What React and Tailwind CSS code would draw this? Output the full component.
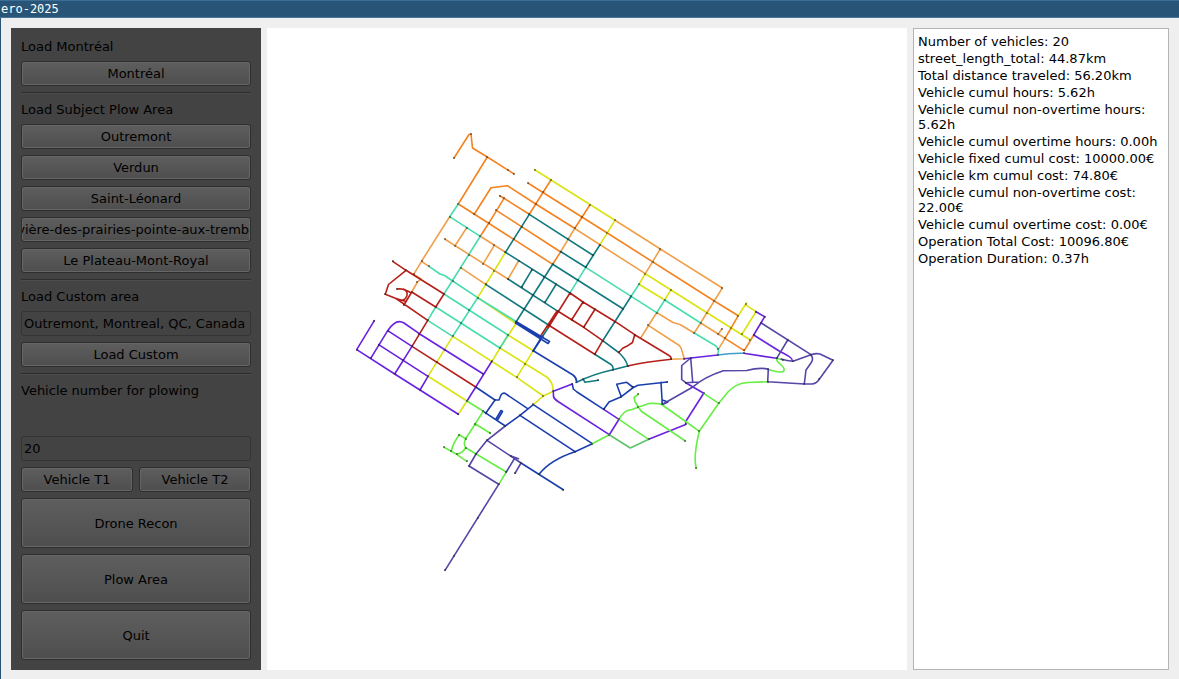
import React from "react";

const ORANGE = "#f5821f";
const TAN = "#f0a04b";
const YELLOW = "#dbe310";
const TEAL = "#12797f";
const MINT = "#48dcae";
const RED = "#b5201a";
const PURPLE = "#6a22e0";
const BLUE = "#1c3fb0";
const GREEN = "#66ee44";
const SLATE = "#5546a8";

const streets = [
  [ORANGE, [
    "M454 158L469 134.5L471 134L472.5 148L487.3 157L513.7 173.7",
    "M487.3 157L458.3 204L488.7 223.3L552.7 264.3",
    "M474.3 214.3L491 187.7L507.3 185.7L535.7 204L575 228.5",
    "M499.7 195.7L504 198.3L529.3 214.3M504 198.3L488.7 223.3L480.3 236.3",
    "M496.3 210.3L560.7 252",
    "M529.3 214.3L551 179.7M528.3 183.3L607.3 233L714.3 301L738.3 315.7",
    "M590 204.7L574.7 228.5M560.5 252L552.7 264.3",
    "M738.3 315.7L725 338.3L744.3 350.7L753.7 335",
  ]],
  [TAN, [
    "M449.7 216.7L421.5 261.3L413.7 274.3M421.5 261.3L429 266.3",
    "M480.3 236.3L505.5 252.3M494.3 245.3L483.3 263.7",
    "M445 239.3L508 279M455 245.7L466.7 227.7M518.5 261L508 279",
    "M574.7 228.5L560.5 252M574.7 228.5L645.3 273.7",
    "M615 220.3L660.3 249L722.3 288L694.3 333",
    "M660.3 249L645.3 273.7M460.7 267.7L485.7 284.3",
    "M413.7 274.3L421 279L417.5 282L411.7 292",
    "M656.7 312.5L673 322.5L680 324.5L694.3 333",
    "M656.7 312.5L641 337.5M648.3 325.3L677 344Q681 346 682 351L684.3 358.7L671.3 359.3",
    "M700.7 323L725 338.3L718.3 349.3M718.3 334.3L721.7 329",
  ]],
  [YELLOW, [
    "M534.7 169.7L615 220.3L600 244.7",
    "M505.5 252.3L477.7 297.7L516 323.5L500 348L492 361.3",
    "M645.3 273.7L707 312.7L731.3 328L750.3 340",
    "M645.3 273.7L639 284.3L664.7 300L671 289.7",
    "M452.7 336.3L428 376.3L467 401L458.3 414.3",
    "M452.7 336.3L516.7 377.3L543.3 396L553.3 391.3",
    "M508 335L533.3 350.7L516.7 377.3",
    "M500 348L546.7 377Q553 382 553.3 391.3M543.3 396L533.3 404.7",
    "M746.5 303L745.3 304.7L756 311.7L742 334M745.3 304.7L738.3 315.7",
  ]],
  [MINT, [
    "M458.3 204L449.7 216.7L480.3 236.3L444 294",
    "M429 266.3L440 274L444.5 275.5L452.7 281L477.7 297.7L516 321.5",
    "M477.7 297.7L452.7 336.3L427.7 320.3L435.7 307L500 348L508 335L444 294",
    "M585.7 267.3L569.7 293.3M585.7 267.3L656.7 312.7L664.7 300",
    "M639 284.3L631 296.5M664.7 300L700.7 323",
    "M694.3 333L716 346L718.5 349.5L717.7 355",
  ]],
  [TEAL, [
    "M505.5 252.3L529.3 214.3L593.3 255.5",
    "M600 244.7L585.7 267.3L560.5 251.5",
    "M505.5 252.3L570 293M552.7 264.3L623.3 309",
    "M552.7 264.3L516 322M508 279L558 311.3",
    "M521.7 287L532 269.7M545 302.3L556 284.5",
    "M485.7 284.3L549.3 325.5M550 325L533 351",
    "M631 296.5L602.7 340.7L618.7 352.5Q626 359 627.7 366",
    "M594.7 354.3L611 364.5Q613.5 366 613 369.7",
    "M627.7 366L613 369.7Q593 374 576 382.5M583.3 379.3L585 382.3L598.3 380.3",
  ]],
  [RED, [
    "M392.7 261.3L406 270.3L444 294L435.7 307L411.7 292L404 305",
    "M406 270.3L388.5 284.5L385.3 294.3L396 298.5L427.7 320.3L412 346.3L475.7 387",
    "M397 289Q409 288 406.8 296Q405 302 397 299.5M403.3 289Q410 292 411 293M396 298.5L406 301.5",
    "M570 293L583 302L615.3 321.7L634.7 334.7L669 355.5Q671.5 357 671.3 359.3",
    "M570 293L548.3 327.5M557 311L540 337M558 311.3L583.7 327.3L602.7 340.7L594.7 354.3L549.3 325.5",
    "M583 302L571.7 319.7M595 309.3L583.7 327.3",
    "M634.7 334.7L632.5 342.5L626.7 346.3L623 348L618.7 352.5",
    "M627.7 366Q645 362 671.3 359.3",
  ]],
  [PURPLE, [
    "M374.3 320.7L356.7 349.7L394.7 374L458.3 414.3",
    "M370.7 358.3L387.7 330.7Q396 318 404 323L419.3 333.7L483.3 374",
    "M387.7 330.7L412 346.3L394.7 374M378.7 344.7L428 376.3L420 390",
    "M491.7 361.5L467 401",
    "M572.3 384L553.3 391.3L553.5 396.5Q554 399 558 401.5L609.3 434.7L619 419.3L603.7 409.3",
    "M648.7 439.3L685.7 424.5V421.5L703.7 393.3L685.7 382.7",
    "M684.3 358.7L717.7 355M743.7 353.3L776.7 358.3",
    "M756 311.7L764.7 316.7L753.7 335L780 351.5Q793 358 792 360",
  ]],
  [BLUE, [
    "M516 321.5L549.5 341.5L548 343.5L515.5 323L516 321.5L541 338.5",
    "M543 336L533.3 350.7L573 375Q577 378 576.5 382.3",
    "M541 338L534 350",
    "M572.3 384L573.3 389L577 392L603.7 409.3L609 402L621.3 396.7L616.7 384.3L626.7 382.3L633.3 387.5L621.3 396.7",
    "M633.3 387.5L638 385.3L667.3 382M661 382.3L662.3 404.5L668 402L662.3 400",
    "M475.7 387L495 400L499 400L501 395Q503.5 392 506 394L527.3 408.3M495 400L485.7 413.3",
    "M483.3 411.3L505.3 426L520 415.3L533.3 404.7L592.3 443.7L575 451.7L520 415.3",
    "M496 419L501 410.5L502.5 411.5L497.5 420M539 474.3Q550 460 575 451.7M521 463L563.3 489.7",
  ]],
  [GREEN, [
    "M467 401L483.3 411.3L465.7 438.7Q463 444 465.7 447.7L506.3 472L498.7 484.3",
    "M475 423.7L490.3 433.3M465.7 438.7L459.3 434.7Q453 443 451.3 451",
    "M444 447.3L456.7 454.3L466.7 461.3M456.7 454.3Q463 453 465.7 447.7",
    "M592.3 443.7L609.3 434.7M648.7 439.3L619 419.3Q624 410 632 409.5L638.3 407.3L649 403.5Q660 403 662.3 405L685.7 421.5L699.3 431.3L718.7 403.3L703.7 393.3",
    "M638.3 394.3L634 397.5L635 401.5L641 411L685.3 441",
    "M699.3 431.3Q693 457 696.3 468.3",
    "M776.7 358.3L783 360M776.7 358.3Q776 361 780 364Q785 368 784 370.5Q783 374 768.3 369.5",
    "M767.7 381.7L748 382.5Q736 383 728 392L718.7 403.3",
  ]],
  [SLATE, [
    "M505.3 426L487 440.3L476 454L469 466L498.7 484.3L445 570.3",
    "M487 440.3L521 463L515 473.3M514.5 458.5L506.3 472M511 456L518.5 458.7",
    "M690.7 358L681.7 365.5V379.5L685.7 382.7L699.5 382M690.7 358L692.7 382.5",
    "M663 404L693.3 386.7Q704 377 723.3 370.7L746.7 370.5Q760 367 768.3 369.3L767.7 381.7L804.3 384L812 384Q816 384 819.3 379.3L833 360.3L820 354Q816 353 811 354.7L793 361.3Q787 361 781 359",
    "M811 354.7Q814 359 811 363L806 370L804.3 384",
    "M811 354.7L761.3 323M787.7 340L776.7 358.3",
  ]],
  ["#3f9fca", ["M717.7 355Q730 353 743.7 353.3"]],
  ["#5fc36b", ["M609.3 434.7L630.3 448L648.7 439.3"]],
];

const crossings = [
  [454, 158], [471, 134], [487, 157], [508, 170], [514, 174], [458, 204], [450, 217], [474, 214], [489, 223],
  [500, 196], [504, 198], [529, 214], [496, 210], [480, 236], [522, 227], [514, 239], [505, 252], [528, 183],
  [535, 170], [551, 180], [543, 192], [536, 204], [590, 205], [582, 217], [575, 228], [568, 239], [561, 252],
  [553, 264], [615, 220], [607, 233], [600, 245], [593, 255], [586, 267], [578, 280], [570, 293], [660, 249],
  [653, 262], [645, 274], [639, 284], [631, 296], [623, 309], [615, 322], [603, 341], [722, 288], [714, 301],
  [707, 313], [701, 323], [694, 333], [738, 316], [731, 328], [725, 338], [718, 349], [671, 290], [665, 300],
  [657, 313], [648, 325], [445, 239], [455, 246], [467, 228], [469, 255], [483, 264], [494, 245], [494, 271],
  [486, 284], [478, 298], [469, 310], [461, 323], [453, 336], [422, 261], [429, 266], [461, 268], [453, 281],
  [444, 294], [436, 307], [428, 320], [419, 334], [412, 346], [403, 360], [395, 374], [393, 261], [406, 270],
  [414, 274], [417, 282], [385, 294], [397, 289], [412, 292], [404, 305], [437, 362], [428, 376], [420, 390],
  [445, 350], [374, 321], [357, 350], [371, 358], [379, 345], [388, 331], [458, 414], [467, 401], [476, 387],
  [483, 374], [492, 361], [500, 348], [508, 335], [516, 322], [524, 309], [533, 295], [544, 277], [519, 261],
  [508, 279], [532, 270], [556, 284], [522, 287], [545, 302], [558, 311], [549, 325], [533, 351], [525, 364],
  [517, 377], [543, 396], [553, 391], [533, 404], [583, 302], [595, 309], [572, 320], [584, 327], [595, 354],
  [635, 335], [619, 352], [628, 366], [613, 370], [583, 379], [598, 380], [572, 384], [604, 409], [621, 397],
  [633, 387], [667, 382], [662, 404], [638, 394], [638, 407], [619, 419], [609, 435], [592, 444], [575, 452],
  [649, 439], [685, 441], [686, 424], [699, 431], [696, 468], [719, 403], [704, 393], [686, 383], [671, 359],
  [684, 359], [691, 358], [718, 355], [744, 353], [744, 350], [750, 340], [742, 334], [754, 335], [761, 323],
  [765, 317], [756, 312], [746, 304], [788, 340], [777, 358], [793, 361], [811, 355], [833, 360], [819, 379],
  [804, 384], [768, 382], [768, 369], [783, 360], [718, 334], [722, 329], [483, 411], [475, 424], [490, 433],
  [466, 439], [466, 448], [459, 435], [451, 451], [444, 447], [457, 454], [467, 461], [495, 400], [486, 413],
  [505, 426], [520, 415], [487, 440], [476, 454], [469, 466], [499, 484], [506, 472], [511, 456], [521, 463],
  [515, 473], [539, 474], [563, 490], [478, 518], [454, 556], [445, 570],
];

const stats = [
  "Number of vehicles: 20",
  "street_length_total: 44.87km",
  "Total distance traveled: 56.20km",
  "Vehicle cumul hours: 5.62h",
  "Vehicle cumul non-overtime hours: 5.62h",
  "Vehicle cumul overtime hours: 0.00h",
  "Vehicle fixed cumul cost: 10000.00€",
  "Vehicle km cumul cost: 74.80€",
  "Vehicle cumul non-overtime cost: 22.00€",
  "Vehicle cumul overtime cost: 0.00€",
  "Operation Total Cost: 10096.80€",
  "Operation Duration: 0.37h",
];

const areas = [
  "Outremont",
  "Verdun",
  "Saint-Léonard",
  "Rivière-des-prairies-pointe-aux-trembles",
  "Le Plateau-Mont-Royal",
];

function Button({ children, tall }) {
  return (
    <button
      type="button"
      className={`flex w-full min-w-0 shrink-0 items-center justify-center overflow-hidden whitespace-nowrap rounded-[3px] border border-[#2e2e2e] bg-linear-to-b from-[#5e5e5e] to-[#4e4e4e] inset-ring inset-ring-[#666666] ${tall ? "h-[50px] pt-0.5" : "h-[25px]"}`}
    >
      {children}
    </button>
  );
}

function Separator() {
  return <hr className="h-[2px] shrink-0 border-0 border-t border-t-[#2d2d2d] bg-[#4c4c4c]" />;
}

const labelClass = "h-[18px] shrink-0 leading-5";

const fieldClass =
  "h-[25px] w-full shrink-0 rounded-[3px] border border-[#343434] bg-[#434343] px-[2px] text-black outline-none";

function StreetMap() {
  return (
    <svg
      viewBox="267 28 640 642"
      className="h-full w-full"
      role="img"
      aria-label="Street network"
      fill="none"
      strokeWidth="1.6"
      strokeLinejoin="round"
      strokeLinecap="round"
    >
      {streets.map(([color, paths]) => (
        <path key={color} d={paths.join("")} stroke={color} />
      ))}
      {crossings.map(([x, y]) => (
        <circle key={`${x}-${y}`} cx={x} cy={y} r="0.8" fill="#1a1a1a" />
      ))}
    </svg>
  );
}

export default function App() {
  return (
    <div className="flex h-screen min-h-[660px] flex-col bg-[#efefef] font-['DejaVu_Sans',sans-serif] text-[13px] text-black">
      <header className="h-[18px] shrink-0 border-y border-t-[#3c6f98] border-b-[#47779c] bg-[#285577] pl-px font-['DejaVu_Sans_Mono',monospace] text-[12px] leading-4 text-white">
        ero-2025
      </header>
      <main className="flex min-h-0 flex-1 gap-[6px] border-l border-[#285577] px-[10px] pt-[10px] pb-[9px]">
        <aside className="flex w-[250px] shrink-0 flex-col gap-[6px] bg-[#434343] px-[10px] pt-[9px] pb-[10px] leading-[18px]">
          <p className={labelClass}>Load Montréal</p>
          <Button>Montréal</Button>
          <Separator />
          <p className={labelClass}>Load Subject Plow Area</p>
          {areas.map((name) => (
            <Button key={name}>{name}</Button>
          ))}
          <Separator />
          <label htmlFor="custom-area" className={labelClass}>Load Custom area</label>
          <input id="custom-area" className={fieldClass} defaultValue="Outremont, Montreal, QC, Canada" />
          <Button>Load Custom</Button>
          <Separator />
          <label htmlFor="vehicles" className={`${labelClass} mb-auto`}>Vehicle number for plowing</label>
          <input id="vehicles" className={fieldClass} defaultValue="20" />
          <div className="grid grid-cols-2 gap-[6px]">
            <Button>Vehicle T1</Button>
            <Button>Vehicle T2</Button>
          </div>
          <Button tall>Drone Recon</Button>
          <Button tall>Plow Area</Button>
          <Button tall>Quit</Button>
        </aside>
        <section className="min-w-0 flex-1 bg-white">
          <StreetMap />
        </section>
        <ul className="flex w-[256px] shrink-0 flex-col gap-[2px] border border-[#b4b4b4] bg-white px-1 pt-[5px] leading-[15px]">
          {stats.map((line) => (
            <li key={line}>{line}</li>
          ))}
        </ul>
      </main>
    </div>
  );
}
